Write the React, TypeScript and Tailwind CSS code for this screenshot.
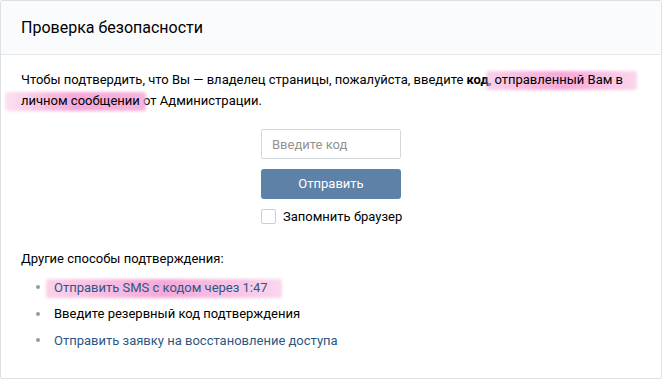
import React from "react";

function Marker({ children, wide }: { children: React.ReactNode; wide?: boolean }) {
  return (
    <span className="relative">
      <span
        className={
          wide
            ? "absolute -left-[16px] -right-[6px] -top-[1px] -bottom-[3px] rounded-[3px] bg-gradient-to-r from-[#f39bd1]/30 via-[#f49fd4]/90 to-[#f39bd1]/75 blur-[1.5px]"
            : "absolute -left-[8px] -right-[14px] -top-[1px] -bottom-[3px] rounded-[3px] bg-gradient-to-r from-[#f39bd1]/45 via-[#f49fd4]/90 to-[#f39bd1]/40 blur-[1.5px]"
        }
      />
      <span className="relative">{children}</span>
    </span>
  );
}

export default function App() {
  const methods = [
    { label: "Отправить SMS с кодом через 1:47", color: "text-[#2a5885]", mark: true },
    { label: "Введите резервный код подтверждения", color: "text-black", mark: false },
    { label: "Отправить заявку на восстановление доступа", color: "text-[#2a5885]", mark: false },
  ];

  return (
    <div className="w-[663px] h-[381px] bg-white font-['Roboto',sans-serif] text-[13px] text-black">
      <div className="w-[662px] h-[379px] border border-[#dce1e6] rounded-[2px] flex flex-col">
        {/* Header */}
        <div className="h-[54px] bg-[#fafbfc] border-b border-[#e7e8ec] flex items-center px-5 text-[16px]">
          Проверка безопасности
        </div>

        <div className="px-5 pt-[14px] flex flex-col">
          <p className="leading-[21px]">
            Чтобы подтвердить, что Вы — владелец страницы, пожалуйста, введите <b>код</b>,{" "}
            <Marker>отправленный Вам в</Marker>
            <br />
            <Marker wide>личном сообщении</Marker> от Администрации.
          </p>

          {/* Form */}
          <div className="flex flex-col items-center mt-[18px]">
            <div className="w-[140px] flex flex-col">
              <input
                placeholder="Введите код"
                className="h-[30px] w-full border border-[#d3d9de] rounded-[2px] px-[10px] text-[13px] placeholder:text-[#929292] outline-none"
              />
              <button className="mt-[10px] h-[30px] w-full rounded-[3px] bg-[#5e81a8] text-white text-[13px]">
                Отправить
              </button>
              <label className="mt-[8px] flex items-center gap-[7px] whitespace-nowrap">
                <span className="w-[15px] h-[15px] shrink-0 border border-[#c5d0db] rounded-[2px] bg-white" />
                <span>Запомнить браузер</span>
              </label>
            </div>
          </div>

          <div className="mt-[22px]">Другие способы подтверждения:</div>
          <ul className="mt-[6px] flex flex-col">
            {methods.map((m) => (
              <li key={m.label} className="h-[26.5px] flex items-center pl-[15px]">
                <span className="w-[4px] h-[4px] rounded-full bg-[#939ca6] mr-[14px]" />
                <span className={m.color}>
                  {m.mark ? <Marker>{m.label}</Marker> : m.label}
                </span>
              </li>
            ))}
          </ul>
        </div>
      </div>
    </div>
  );
}
